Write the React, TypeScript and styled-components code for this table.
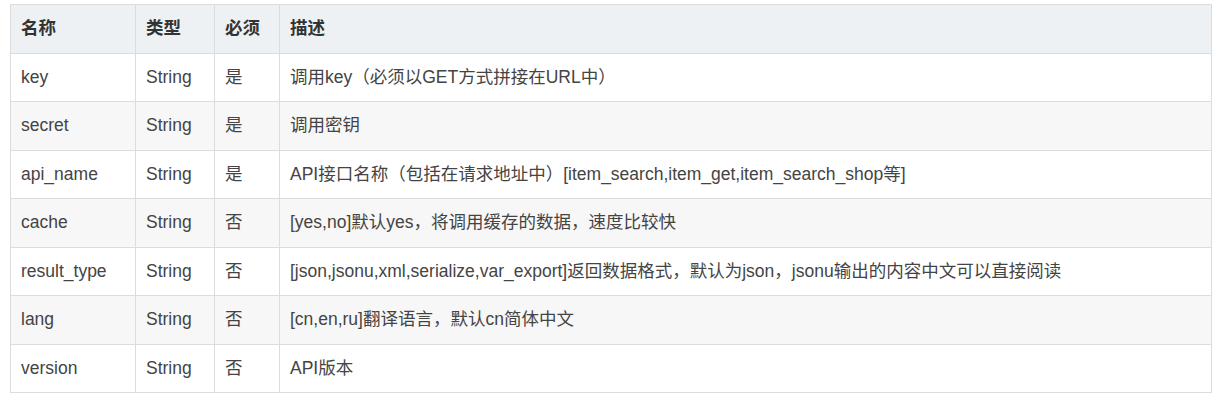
import React from "react";
import styled, { createGlobalStyle } from "styled-components";

const GlobalStyle = createGlobalStyle`
  body {
    margin: 0;
    background: #fff;
    font-family: "Liberation Sans", Arial, "Noto Sans CJK SC", sans-serif;
  }
`;

const Page = styled.div`
  padding: 4px 12px 0 10px;
`;

const Table = styled.table`
  width: 1202px;
  border-collapse: collapse;
  table-layout: fixed;
  font-size: 17.5px;
  color: #444;
`;

const HeadCell = styled.th<{ $w?: number }>`
  box-sizing: border-box;
  width: ${(p) => (p.$w ? `${p.$w}px` : "auto")};
  background: #eef1f4;
  border: 1px solid #dcdcdc;
  padding: 12px 10px;
  line-height: 23.5px;
  text-align: left;
  font-weight: bold;
  color: #333;
`;

const Row = styled.tr<{ $alt: boolean }>`
  background: ${(p) => (p.$alt ? "#f7f7f7" : "#fff")};
`;

const Cell = styled.td`
  border: 1px solid #dcdcdc;
  padding: 12px 10px;
  line-height: 23.5px;
  white-space: nowrap;
`;

const rows = [
  ["key", "String", "是", "调用key（必须以GET方式拼接在URL中）"],
  ["secret", "String", "是", "调用密钥"],
  [
    "api_name",
    "String",
    "是",
    "API接口名称（包括在请求地址中）[item_search,item_get,item_search_shop等]",
  ],
  ["cache", "String", "否", "[yes,no]默认yes，将调用缓存的数据，速度比较快"],
  [
    "result_type",
    "String",
    "否",
    "[json,jsonu,xml,serialize,var_export]返回数据格式，默认为json，jsonu输出的内容中文可以直接阅读",
  ],
  ["lang", "String", "否", "[cn,en,ru]翻译语言，默认cn简体中文"],
  ["version", "String", "否", "API版本"],
];

export default function App() {
  return (
    <Page>
      <GlobalStyle />
      <Table>
        <thead>
          <tr>
            <HeadCell $w={125}>名称</HeadCell>
            <HeadCell $w={79}>类型</HeadCell>
            <HeadCell $w={65}>必须</HeadCell>
            <HeadCell>描述</HeadCell>
          </tr>
        </thead>
        <tbody>
          {rows.map((r, i) => (
            <Row key={r[0]} $alt={i % 2 === 1}>
              {r.map((c, j) => (
                <Cell key={j}>{c}</Cell>
              ))}
            </Row>
          ))}
        </tbody>
      </Table>
    </Page>
  );
}
